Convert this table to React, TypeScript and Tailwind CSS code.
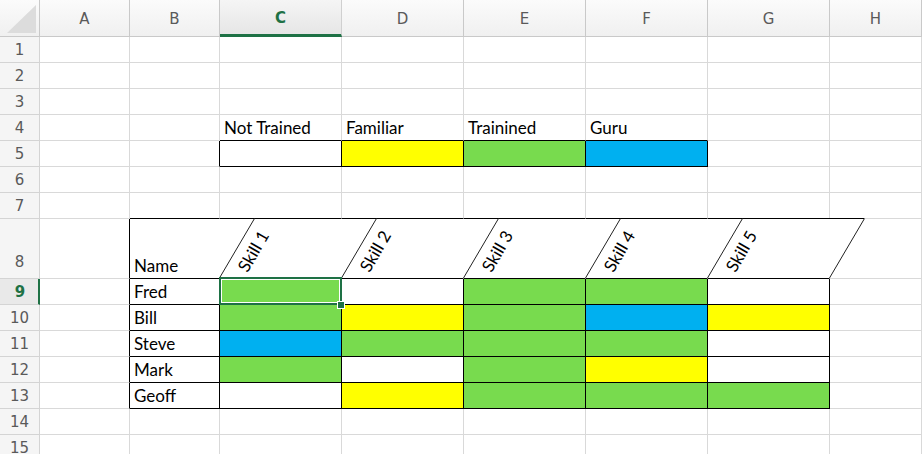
const COLS = ["A", "B", "C", "D", "E", "F", "G", "H"];

const FILL: Record<string, string> = {
  w: "",
  y: "bg-[#ffff00]",
  g: "bg-[#78db4e]",
  b: "bg-[#00b0f0]",
};

// rows 1..15, each entry = 8 cells (A..H); text or fill key
type Cell = { text?: string; fill?: string };

const skillRows: [string, string][] = [
  ["Fred", "gwggw"],
  ["Bill", "gygby"],
  ["Steve", "bgggw"],
  ["Mark", "gwgyw"],
  ["Geoff", "wyggg"],
];

function buildSheet(): Cell[][] {
  const rows: Cell[][] = [];
  for (let r = 1; r <= 15; r++) rows.push(COLS.map(() => ({})));
  rows[3][2].text = "Not Trained";
  rows[3][3].text = "Familiar";
  rows[3][4].text = "Trainined";
  rows[3][5].text = "Guru";
  rows[4][3].fill = "y";
  rows[4][4].fill = "g";
  rows[4][5].fill = "b";
  rows[7][1].text = "Name";
  skillRows.forEach(([name, fills], i) => {
    rows[8 + i][1].text = name;
    fills.split("").forEach((f, j) => {
      rows[8 + i][2 + j].fill = f;
    });
  });
  return rows;
}

// c: 1 = A ... 8 = H
function rightEdge(r: number, c: number): "black" | "none" | "grid" {
  if (r === 5 && c >= 2 && c <= 6) return "black";
  if (r >= 8 && r <= 13 && c === 1) return "black";
  if (r === 8 && c >= 2 && c <= 7) return "none";
  if (r >= 9 && r <= 13 && c >= 2 && c <= 7) return "black";
  return "grid";
}

function bottomEdge(r: number, c: number): "black" | "grid" {
  if ((r === 4 || r === 5) && c >= 3 && c <= 6) return "black";
  if (r >= 7 && r <= 13 && c >= 2 && c <= 7) return "black";
  return "grid";
}

const headerFont = { fontFamily: "'DejaVu Sans', sans-serif" };
const cellFont = { fontFamily: "Lato, 'Open Sans', sans-serif" };

export default function App() {
  const sheet = buildSheet();

  return (
    <div className="w-[922px] h-[454px] overflow-hidden bg-white">
      <div className="grid grid-cols-[40px_90px_90px_122px_122px_122px_122px_122px_92px] grid-rows-[37px_26px_26px_26px_26px_26px_26px_26px_60px_26px_26px_26px_26px_26px_26px_26px]">
        {/* corner */}
        <div className="relative border-r border-b border-[#c9c9c9] bg-linear-to-b from-[#fbfbfb] to-[#f0f0f0]">
          <svg className="absolute inset-0" width="39" height="36" viewBox="0 0 39 36">
            <polygon points="7,33 36,5 36,33" fill="#dcdcdc" />
          </svg>
        </div>
        {COLS.map((col) => (
          <div
            key={col}
            style={headerFont}
            className={
              col === "C"
                ? "flex items-center justify-center border-r border-r-[#d0d0d0] border-b-[3px] border-b-[#1e7145] bg-linear-to-b from-[#f5f5f5] to-[#e6e6e6] text-[15px] font-bold text-[#1e7145] pt-[3px]"
                : "flex items-center justify-center border-r border-b border-[#c9c9c9] bg-linear-to-b from-[#fbfbfb] to-[#f0f0f0] text-[15px] text-[#5a5a5a] pt-[2px]"
            }
          >
            {col}
          </div>
        ))}

        {sheet.map((row, ri) => {
          const r = ri + 1;
          return [
            <div
              key={`h${r}`}
              style={headerFont}
              className={
                r === 9
                  ? "flex items-center justify-center border-r-2 border-r-[#1e7145] border-b border-b-[#d4d4d4] bg-[#e9e9e9] text-[15px] font-bold text-[#1e7145] pl-[2px] pt-[2px]"
                  : "flex items-center justify-center border-r border-b border-[#d4d4d4] bg-[#f5f5f5] text-[15px] text-[#5a5a5a] pt-[2px]"
              }
            >
              {r > 8 ? r : r === 8 ? <span className="pt-[26px]">8</span> : r}
            </div>,
            ...row.map((cell, ci) => {
              const c = ci + 1;
              const re = rightEdge(r, c);
              const be = bottomEdge(r, c);
              const cls = [
                "relative flex items-end px-[4px] pb-[1px] text-[17px] leading-[22px] text-black whitespace-nowrap",
                re === "black" ? "border-r border-r-black" : re === "none" ? "border-r border-r-transparent" : "border-r border-r-[#d9d9d9]",
                be === "black" ? "border-b border-b-black" : "border-b border-b-[#d9d9d9]",
                cell.fill ? FILL[cell.fill] : "",
              ].join(" ");
              return (
                <div key={`${r}-${c}`} className={cls} style={cellFont}>
                  {cell.text}
                  {r === 8 && c >= 3 && c <= 7 && (
                    <span className="absolute left-[33px] top-[32px] -translate-x-1/2 -translate-y-1/2 -rotate-60 whitespace-nowrap text-[17px] leading-none">
                      Skill {c - 2}
                    </span>
                  )}
                  {r === 8 && c === 3 && (
                    <svg className="absolute left-[-1px] top-[-1px] z-10 overflow-visible" width="650" height="61" viewBox="0 0 650 61">
                      {[0, 1, 2, 3, 4, 5].map((k) => (
                        <line key={k} x1={k * 122 + 0.5} y1={60} x2={k * 122 + 35.5} y2={0.5} stroke="#222" strokeWidth="1" />
                      ))}
                      <line x1={610} y1={0.5} x2={645} y2={0.5} stroke="#000" strokeWidth="1" />
                    </svg>
                  )}
                  {r === 9 && c === 3 && (
                    <>
                      <div className="absolute left-[-1px] top-[-2px] w-[123px] h-[28px] border-2 border-[#1e7145] shadow-[inset_0_0_0_1px_#ffffff] z-20" />
                      <div className="absolute left-[117px] top-[22px] w-[8px] h-[8px] bg-[#1e7145] border border-white z-30" />
                    </>
                  )}
                </div>
              );
            }),
          ];
        })}
      </div>
    </div>
  );
}
